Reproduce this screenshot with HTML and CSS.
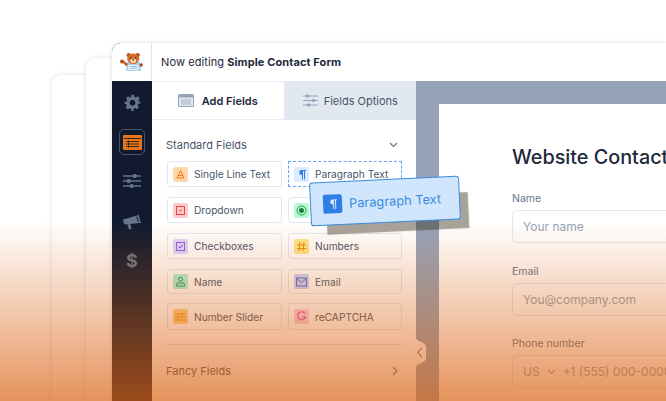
FILE: index.html
```html
<!DOCTYPE html>
<html>
<head>
<meta charset="UTF-8">
<title>Now editing Simple Contact Form</title>
<link rel="stylesheet" href="styles.css">
</head>
<body>
	<div class="back-card back-one"></div>
	<div class="back-card back-two"></div>

	<div class="window">
		<div class="sidebar">
			<div class="logo">
				<svg width="23" height="18" viewBox="0 0 23 18">
					<path d="M7 9H20L21 18H6Z" fill="#a9cfee"/>
					<path d="M8.500 12H18.500V17H8.500Z" fill="#eef6fc"/>
					<path d="M10 13.500H17M10 15.300H17" stroke="#7fa9cf" stroke-width=".8"/>
					<path d="M1.500 8.500L3.500 7.500L8 11L6.500 13.500Z" fill="#c9601f"/>
					<circle cx="2" cy="8.500" r="2" fill="#b9521a"/>
					<circle cx="21.200" cy="12" r="1.700" fill="#a8481a"/>
					<circle cx="8.800" cy="2.200" r="2.100" fill="#b9521a"/>
					<circle cx="17.700" cy="2.200" r="2.100" fill="#b9521a"/>
					<ellipse cx="13.200" cy="5.800" rx="6" ry="5.200" fill="#d76a2b"/>
					<ellipse cx="13.200" cy="7.800" rx="3" ry="2.300" fill="#f6d3b0"/>
					<circle cx="10.800" cy="4.800" r=".8" fill="#3a2314"/>
					<circle cx="15.600" cy="4.800" r=".8" fill="#3a2314"/>
					<ellipse cx="13.200" cy="6.800" rx="1" ry=".8" fill="#3a2314"/>
				</svg>
			</div>
			<div class="side-icons">
				<svg class="side-icon" width="17" height="17" viewBox="0 0 24 24"><path fill="#64748b" fill-rule="evenodd" d="M10 1h4l.6 3.1 2 .8L19.300 3.200l2.800 2.800-1.700 2.700.8 2L23.300 11.300v2l-3.100.6-.8 2 1.700 2.700-2.800 2.800-2.700-1.700-2 .8L13.500 24h-3l-.6-3.100-2-.8-2.700 1.700-2.800-2.800 1.700-2.700-.8-2L.7 13.300v-2l3.100-.6.800-2L2.900 6l2.800-2.800 2.700 1.700 2-.8zM12 8.300a4 4 0 1 0 0 8 4 4 0 0 0 0-8z"/></svg>
				<div class="side-active">
					<svg width="19" height="15" viewBox="0 0 19 15"><rect width="19" height="15" rx="1" fill="#e8751a"/><path d="M1 3.500H18" stroke="#2b2320" stroke-width="1"/><path d="M3 6.500H16M3 9H16M3 11.500H16M5.500 5.500V13" stroke="#2b2320" stroke-width=".9"/></svg>
				</div>
				<svg class="side-icon sliders" width="18" height="16" viewBox="0 0 18 16"><path d="M0 3H18M0 8H18M0 13H18" stroke="#64748b" stroke-width="1.600"/><rect x="10" y="1" width="3.500" height="4" rx="1" fill="#64748b"/><rect x="4" y="6" width="3.500" height="4" rx="1" fill="#64748b"/><rect x="7" y="11" width="3.500" height="4" rx="1" fill="#64748b"/></svg>
				<svg class="side-icon horn" width="18" height="16" viewBox="0 0 18 16"><path d="M0 5.500L14 1.500L15.500 .5L18 9L16 9L3 10.500L1 10Z" fill="#64748b"/><path d="M4.500 10.500L7.500 10L8.500 15L6 15.500Z" fill="#64748b"/><path d="M13.800 2.500L15.500 8" stroke="#111a2e" stroke-width="1"/></svg>
				<div class="dollar">$</div>
			</div>
		</div>

		<div class="main">
			<div class="topbar">Now editing <b>Simple Contact Form</b></div>
			<div class="workspace">
				<div class="panel">
					<div class="tabs">
						<div class="tab tab-on">
							<svg width="16" height="13" viewBox="0 0 16 13"><rect width="16" height="13" rx="1.500" fill="#94a3b8"/><rect x="1" y="3.500" width="14" height="8.500" fill="#e2e8f0"/><path d="M3 6H13M3 8H13M3 10H13" stroke="#94a3b8" stroke-width=".8"/></svg>
							Add Fields
						</div>
						<div class="tab">
							<svg width="15" height="13" viewBox="0 0 15 13"><path d="M0 2H15M0 6.500H15M0 11H15" stroke="#94a3b8" stroke-width="1.200"/><rect x="3" y=".5" width="3" height="3" rx="1" fill="#94a3b8"/><rect x="9" y="5" width="3" height="3" rx="1" fill="#94a3b8"/><rect x="4" y="9.500" width="3" height="3" rx="1" fill="#94a3b8"/></svg>
							Fields Options
						</div>
					</div>
					<div class="section-head">
						Standard Fields
						<svg width="9" height="6" viewBox="0 0 9 6"><path d="M1 1L4.500 4.500L8 1" fill="none" stroke="#64748b" stroke-width="1.100"/></svg>
					</div>
					<div class="fields">
						<div class="field"><span class="ico orange"><svg width="11" height="11" viewBox="0 0 11 11"><path d="M5.500 1.500L2 9H9ZM3.500 6.500H7.500" fill="none" stroke="#f97316" stroke-width="1"/></svg></span>Single Line Text</div>
						<div class="field field-drop"><span class="ico blue"><svg width="10" height="11" viewBox="0 0 10 11"><path d="M4.500 1H9V2H8V10.500H7V2H6V10.500H5V6A2.500 2.500 0 0 1 4.500 1Z" fill="#2f80e4"/></svg></span>Paragraph Text</div>
						<div class="field"><span class="ico red"><svg width="11" height="11" viewBox="0 0 11 11"><rect x="1.500" y="1.500" width="8" height="8" fill="none" stroke="#ef4444"/><rect x="4.500" y="4.800" width="2" height="1.500" fill="#ef4444"/></svg></span>Dropdown</div>
						<div class="field"><span class="ico green"><svg width="11" height="11" viewBox="0 0 11 11"><circle cx="5.500" cy="5.500" r="4.500" fill="none" stroke="#16a34a"/><circle cx="5.500" cy="5.500" r="2.500" fill="#15803d"/></svg></span>Multiple Choice</div>
						<div class="field"><span class="ico purple"><svg width="11" height="11" viewBox="0 0 11 11"><rect x="1.500" y="1.500" width="8" height="8" fill="none" stroke="#8b5cf6"/><path d="M3.500 5.500L5 7L7.800 3.800" fill="none" stroke="#7c3aed"/></svg></span>Checkboxes</div>
						<div class="field"><span class="ico yellow"><svg width="11" height="11" viewBox="0 0 11 11"><path d="M4 1L3 10M8 1L7 10M1 4H10M1 7.500H10" stroke="#e8920c" stroke-width="1.100"/></svg></span>Numbers</div>
						<div class="field"><span class="ico mint"><svg width="11" height="11" viewBox="0 0 11 11"><circle cx="5.500" cy="3.200" r="2" fill="none" stroke="#0f9d76"/><path d="M1.500 10V8.500Q1.500 7 3 7H8Q9.500 7 9.500 8.500V10Z" fill="none" stroke="#0f9d76"/></svg></span>Name</div>
						<div class="field"><span class="ico indigo"><svg width="11" height="10" viewBox="0 0 11 10"><rect x=".5" y="1" width="10" height="8" fill="none" stroke="#4f6fd8"/><path d="M.5 1.500L5.500 5.500L10.500 1.500" fill="none" stroke="#4f6fd8"/></svg></span>Email</div>
						<div class="field"><span class="ico amber"><svg width="11" height="10" viewBox="0 0 11 10"><path d="M0 2H11M0 5H11M0 8H11" stroke="#e8920c"/><path d="M7 .5V3.500M3 3.500V6.500M6 6.500V9.500" stroke="#e8920c"/></svg></span>Number Slider</div>
						<div class="field"><span class="ico pink"><svg width="11" height="11" viewBox="0 0 11 11"><path d="M9 2.500A4 4 0 1 0 9.500 6H5.800" fill="none" stroke="#ec4899" stroke-width="1.200"/></svg></span>reCAPTCHA</div>
					</div>
					<div class="section-head fancy">
						Fancy Fields
						<svg width="6" height="10" viewBox="0 0 6 10"><path d="M1 1L5 5L1 9" fill="none" stroke="#64748b" stroke-width="1.100"/></svg>
					</div>
				</div>

				<div class="canvas">
					<div class="form">
						<h1>Website Contact Form</h1>
						<label>Name</label>
						<div class="input">Your name</div>
						<label>Email</label>
						<div class="input">You@company.com</div>
						<label>Phone number</label>
						<div class="input">US <svg class="caret" width="9" height="6" viewBox="0 0 9 6"><path d="M1 1L4.500 4.500L8 1" fill="none" stroke="#94a3b8" stroke-width="1.100"/></svg> +1 (555) 000-0000</div>
					</div>
				</div>
			</div>
		</div>
	</div>

	<svg class="notch" width="11" height="29" viewBox="0 0 11 29">
		<path d="M0 0C1 4 10 4 10 9V20C10 25 1 25 0 29Z" fill="#fff"/>
		<path d="M6 9.500L2 14.500L6 19.500" fill="none" stroke="#64748b" stroke-width="1.100"/>
	</svg>

	<div class="drag-card">
		<span class="drag-ico"><svg width="10" height="11" viewBox="0 0 10 11"><path d="M4.500 1H9V2H8V10.500H7V2H6V10.500H5V6A2.500 2.500 0 0 1 4.500 1Z" fill="#dbeafe"/></svg></span>
		Paragraph Text
	</div>

	<div class="fade"></div>
</body>
</html>
```

FILE: styles.css
```css
html, body {
	margin: 0;
	height: 401px;
	overflow: hidden;
	background-color: #fff;
	font-family: "Inter", "Liberation Sans", sans-serif;
	color: #1e293b;
}

/* stacked windows behind the builder */
.back-card {
	position: absolute;
	width: 300px;
	height: 326px;
	background-color: #fff;
	border-radius: 9px 0 0 0;
	box-shadow: 0 0 5px rgba(15, 23, 42, .13);
}
.back-one {
	left: 52px;
	top: 75px;
}
.back-two {
	left: 86px;
	top: 58px;
	height: 343px;
}

.window {
	position: relative;
	display: flex;
	width: 554px;
	height: 358px;
	margin: 43px 0 0 112px;
	background-color: #fff;
	border-radius: 9px 0 0 0;
	box-shadow: 0 0 4px rgba(15, 23, 42, .16);
	overflow: hidden;
}

.sidebar {
	width: 40px;
	flex: none;
	display: flex;
	flex-direction: column;
	background-color: #111a2e;
}
.logo {
	height: 38px;
	flex: none;
	display: flex;
	align-items: center;
	justify-content: center;
	background-color: #fff;
	border-right: 1px solid #e2e8f0;
	box-sizing: border-box;
}
.side-icons {
	display: flex;
	flex-direction: column;
	align-items: center;
	padding-top: 13px;
}
.side-active {
	width: 26px;
	height: 26px;
	margin-top: 18px;
	display: flex;
	align-items: center;
	justify-content: center;
	box-sizing: border-box;
	border: 1px solid #475569;
	border-radius: 5px;
}
.sliders {
	margin-top: 18px;
}
.horn {
	margin-top: 25px;
}
.dollar {
	margin-top: 20px;
	font-size: 18px;
	line-height: 22px;
	font-weight: 700;
	color: #64748b;
}

.main {
	flex: 1;
	display: flex;
	flex-direction: column;
	min-width: 0;
}
.topbar {
	height: 38px;
	flex: none;
	display: flex;
	align-items: center;
	gap: 3px;
	padding-left: 9px;
	font-size: 11px;
	letter-spacing: .1px;
	color: #1e293b;
	box-sizing: border-box;
}
.workspace {
	flex: 1;
	min-height: 0;
	display: flex;
}

.panel {
	width: 264px;
	flex: none;
}
.tabs {
	display: flex;
	height: 39px;
	background-color: #e2e8f0;
}
.tab {
	flex: 1;
	display: flex;
	align-items: center;
	justify-content: center;
	gap: 6px;
	font-size: 11px;
	color: #475569;
}
.tab-on {
	gap: 8px;
	margin-right: 1px;
	background-color: #fff;
	font-weight: 600;
	color: #1e293b;
	box-shadow: inset 0 -1px 0 #e8edf4, inset 0 1px 0 #e8edf4;
}

.section-head {
	display: flex;
	justify-content: space-between;
	align-items: center;
	height: 14px;
	padding: 18px 18px 0 14px;
	font-size: 11px;
	color: #475569;
}
.fancy {
	margin: 0 14px;
	padding: 19px 4px 0 0;
	border-top: 1px solid #e2e8f0;
}

.fields {
	display: grid;
	grid-template-columns: 115px 114px;
	grid-template-rows: 26px 26px 26px 25px 26px;
	column-gap: 6px;
	row-gap: 10px;
	padding: 9px 0 14px 15px;
}
.fields .field:nth-child(n+9) {
	margin-top: -1px;
}
.field {
	display: flex;
	align-items: center;
	gap: 6px;
	padding-left: 5px;
	box-sizing: border-box;
	background-color: #fff;
	border: 1px solid #e2e8f0;
	border-radius: 3px;
	font-size: 10.200px;
	color: #475569;
	white-space: nowrap;
}
.field-drop {
	border: 1px dashed #60a5fa;
	border-radius: 0;
}
.ico {
	width: 15px;
	height: 15px;
	flex: none;
	display: flex;
	align-items: center;
	justify-content: center;
	border-radius: 2px;
}
.orange { background-color: #fed7aa; }
.blue { background-color: #dbeafe; }
.red { background-color: #fecaca; }
.green { background-color: #bbf7d0; }
.purple { background-color: #ddd6fe; }
.yellow { background-color: #fde68a; }
.mint { background-color: #a7f3d0; }
.indigo { background-color: #c7d2fe; }
.amber { background-color: #fdd28a; }
.pink { background-color: #fbcfe8; }

.canvas {
	flex: 1;
	min-width: 0;
	padding: 23px 0 0 23px;
	background-color: #94a3b8;
}
.form {
	height: 100%;
	padding: 40px 0 0 73px;
	background-color: #fff;
	box-sizing: border-box;
	white-space: nowrap;
	overflow: hidden;
}
.form h1 {
	margin: 0 0 22px;
	font-size: 19.800px;
	line-height: 26px;
	font-weight: 500;
	color: #1e293b;
}
.form label {
	display: block;
	font-size: 10.500px;
	line-height: 13px;
	margin-bottom: 5px;
	color: #64748b;
}
.input {
	display: flex;
	align-items: center;
	gap: 7px;
	width: 240px;
	height: 33px;
	margin-bottom: 21.500px;
	padding-left: 10px;
	box-sizing: border-box;
	border: 1px solid #e2e8f0;
	border-radius: 5px;
	font-size: 12px;
	color: #94a3b8;
}

.notch {
	position: absolute;
	left: 416px;
	top: 338px;
}

.drag-card {
	position: absolute;
	left: 310px;
	top: 179px;
	width: 150px;
	height: 44px;
	display: flex;
	align-items: center;
	gap: 7px;
	padding-left: 12px;
	box-sizing: border-box;
	background-color: #cfe6fd;
	border: 1px solid #3b8ae0;
	border-radius: 3px;
	font-size: 12.800px;
	color: #3b8ae0;
	transform: rotate(-2.700deg);
	box-shadow: 12px 13px 1px -4px rgba(60, 50, 30, .45);
}
.drag-ico {
	width: 19px;
	height: 19px;
	flex: none;
	display: flex;
	align-items: center;
	justify-content: center;
	background-color: #2f80e4;
	border-radius: 2px;
}

/* orange wash over the lower part of the picture */
.fade {
	position: absolute;
	left: 0;
	top: 222px;
	width: 666px;
	height: 179px;
	background: linear-gradient(to bottom, rgba(218, 98, 18, 0), rgba(218, 98, 18, .69));
}
```
